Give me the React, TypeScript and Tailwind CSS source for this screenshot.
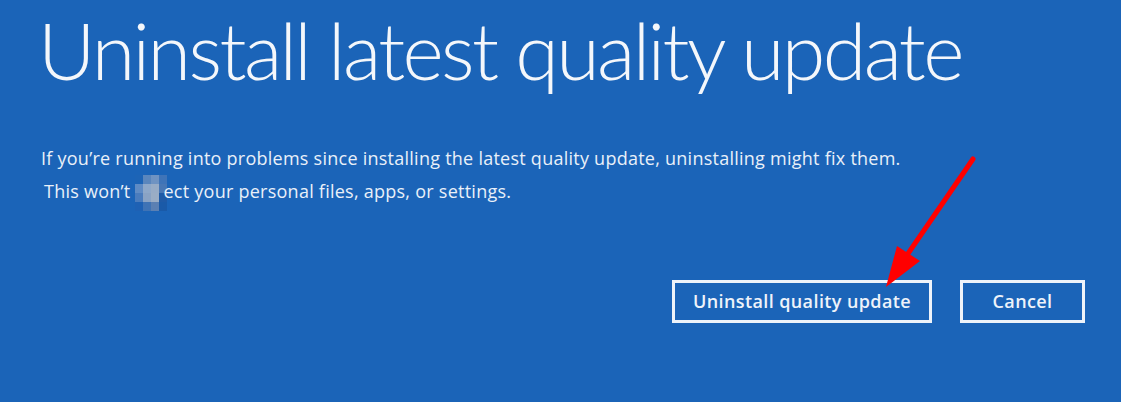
import React from 'react';

const blurCells = [
    ['#1d64b6', '#5a86bd', '#6f93c2', '#3f74b8'],
    ['#5f8bc4', '#8ea8c9', '#98acc6', '#4877b5'],
    ['#4a7cbd', '#8aa3c4', '#9aadc5', '#1f5aa6'],
    ['#1e61b4', '#3f73b5', '#5b80b3', '#1a5aa8'],
];

function Pixelated() {
    return (
        <span className="inline-flex flex-col align-middle mr-[-4px] -my-3">
            {blurCells.map((row, i) => (
                <span key={i} className="flex">
                    {row.map((c, j) => (
                        <span key={j} className="block w-[8px] h-[9px]" style={{ backgroundColor: c }} />
                    ))}
                </span>
            ))}
        </span>
    );
}

export default function App() {
    return (
        <div className="relative w-[1121px] h-[402px] overflow-hidden bg-[#1b64b8] text-white font-['Open_Sans',sans-serif]">
            <div className="pl-[41px]">
                <h1 className="-ml-[3px] font-['Lato',sans-serif] text-[79px] font-light leading-[100px] tracking-[-2.6px] text-[#f4f7fb]">
                    Uninstall latest quality update
                </h1>

                <div className="mt-[42px] text-[18px] tracking-[0.25px] text-[#e9f0f9] leading-[33px]">
                    <p>If you’re running into problems since installing the latest quality update, uninstalling might fix them.</p>
                    <p className="pl-[3px]">
                        This won’t <Pixelated />ect your personal files, apps, or settings.
                    </p>
                </div>

                <div className="flex justify-end gap-[28px] pr-[36px] mt-[72px]">
                    <button className="w-[260px] h-[43px] border-[3px] border-[#eef3fa] text-[18px] tracking-[0.4px] font-semibold text-[#eef3fa]">
                        Uninstall quality update
                    </button>
                    <button className="w-[125px] h-[43px] border-[3px] border-[#eef3fa] text-[18px] tracking-[0.4px] font-semibold text-[#eef3fa]">
                        Cancel
                    </button>
                </div>
            </div>

            <svg className="absolute left-0 top-0" width="1121" height="402" viewBox="0 0 1121 402">
                <line x1="973" y1="159" x2="905" y2="258" stroke="#ff0000" strokeWidth="5" strokeLinecap="round" />
                <polygon points="886,287 897,246 920,261" fill="#ff0000" />
            </svg>
        </div>
    );
}
